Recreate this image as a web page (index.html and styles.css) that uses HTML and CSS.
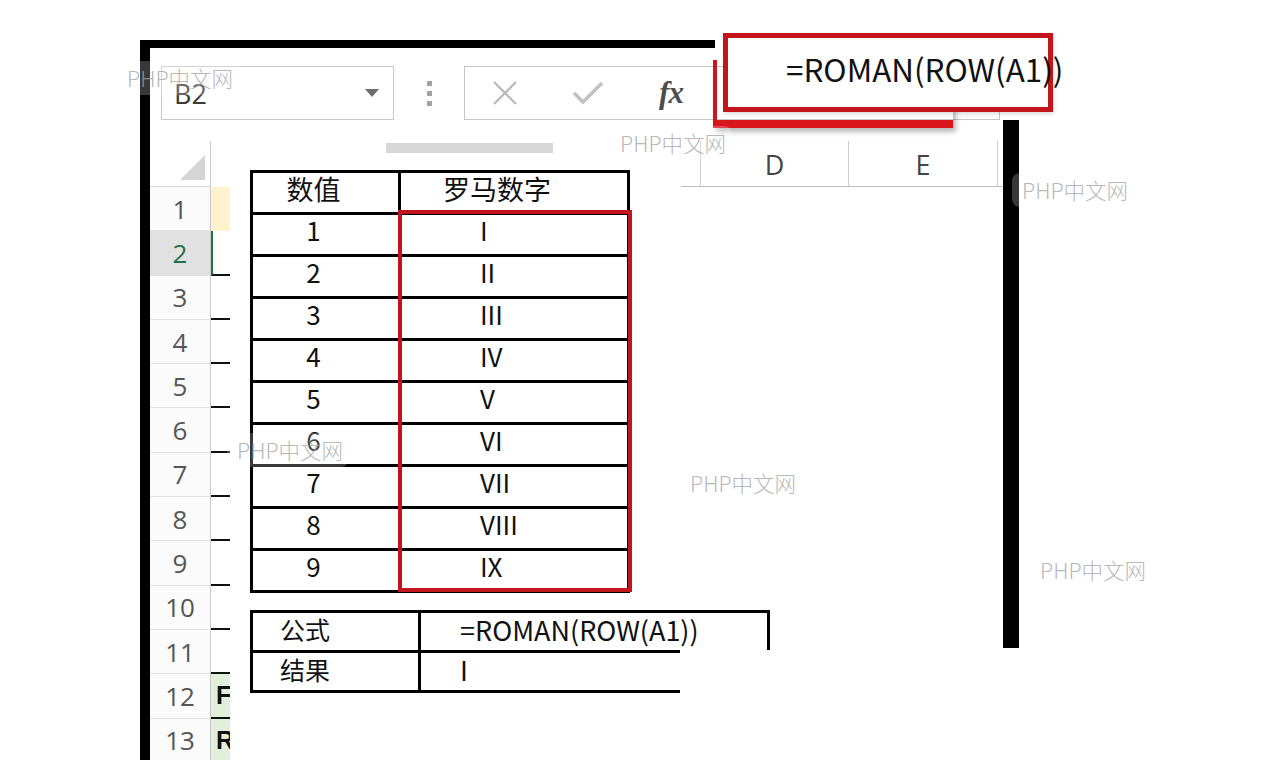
FILE: index.html
```html
<!DOCTYPE html>
<html lang="zh">
<head>
<meta charset="utf-8">
<title>ROMAN</title>
<link rel="stylesheet" href="styles.css">
</head>
<body>
<div class="canvas">
  <div class="excel">
    <div class="toolbar">
      <div class="namebox"><span class="ref">B2</span><span class="caret"></span></div>
      <div class="dots"><i></i><i></i><i></i></div>
      <div class="fbox">
        <span class="slot"><svg width="28" height="28" viewBox="0 0 28 28"><path d="M3 3 L25 25 M25 3 L3 25" stroke="#b8b8b8" stroke-width="2.2" fill="none"/></svg></span>
        <span class="slot"><svg width="34" height="28" viewBox="0 0 34 28"><path d="M3 14 L12 23 L31 4" stroke="#c2c2c2" stroke-width="3.6" fill="none"/></svg></span>
        <span class="slot fx">fx</span>
      </div>
    </div>
    <div class="colhead">
      <div class="corner"><span class="tri"></span></div>
      <div class="hgap1"></div>
      <div class="colbar"></div>
      <div class="hgap2"></div>
      <div class="cols">
        <div class="cpad"></div>
        <div class="col">D</div>
        <div class="col e">E</div>
        <div class="col end"></div>
      </div>
    </div>
    <div class="sheet">
      <div class="row"><div class="rh">1</div><div class="stub y"></div></div>
      <div class="row"><div class="rh sel">2</div><div class="stub g b"></div></div>
      <div class="row"><div class="rh">3</div><div class="stub b"></div></div>
      <div class="row"><div class="rh">4</div><div class="stub b"></div></div>
      <div class="row"><div class="rh">5</div><div class="stub b"></div></div>
      <div class="row"><div class="rh">6</div><div class="stub b"></div></div>
      <div class="row"><div class="rh">7</div><div class="stub b"></div></div>
      <div class="row"><div class="rh">8</div><div class="stub b"></div></div>
      <div class="row"><div class="rh">9</div><div class="stub b"></div></div>
      <div class="row"><div class="rh">10</div><div class="stub b"></div></div>
      <div class="row"><div class="rh">11</div><div class="stub b"></div></div>
      <div class="row"><div class="rh">12</div><div class="stub f b">F</div></div>
      <div class="row"><div class="rh">13</div><div class="stub f">R</div></div>
    </div>
  </div>

  <div class="vbar"></div>

  <div class="t1">
    <div class="n h">数值</div><div class="hr h">罗马数字</div>
    <div class="n">1</div><div class="r">I</div>
    <div class="n">2</div><div class="r">II</div>
    <div class="n">3</div><div class="r">III</div>
    <div class="n">4</div><div class="r">IV</div>
    <div class="n">5</div><div class="r">V</div>
    <div class="n">6</div><div class="r">VI</div>
    <div class="n">7</div><div class="r">VII</div>
    <div class="n">8</div><div class="r">VIII</div>
    <div class="n">9</div><div class="r">IX</div>
  </div>
  <div class="redbox"></div>

  <div class="t2">
    <div class="k">公式</div><div class="v">=ROMAN(ROW(A1))</div>
    <div class="k">结果</div><div class="v">I</div>
  </div>
  <div class="t2cut"></div>

  <div class="patch"></div>
  <div class="callout-back"></div>
  <div class="callout">=ROMAN(ROW(A1))</div>

  <div class="wm w1">PHP中文网</div>
  <div class="wm w2">PHP中文网</div>
  <div class="wm w3">PHP中文网</div>
  <div class="wm w4">PHP中文网</div>
  <div class="wm w5">PHP中文网</div>
  <div class="wm w6">PHP中文网</div>
</div>
</body>
</html>
```

FILE: styles.css
```css
html, body {
  margin: 0;
  padding: 0;
  background: #fff;
}
body {
  width: 1280px;
  height: 760px;
  overflow: hidden;
  font-family: "Open Sans", "Noto Sans", "Liberation Sans", sans-serif;
}
.canvas {
  position: relative;
  width: 1280px;
  height: 760px;
  overflow: hidden;
  padding: 40px 0 0 140px;
  box-sizing: border-box;
}

/* Excel window */
.excel {
  width: 863px;
  height: 720px;
  box-sizing: border-box;
  border-left: 10px solid #000;
  border-top: 8px solid #000;
  background: #fff;
}
.toolbar {
  height: 93px;
  box-sizing: border-box;
  padding: 18px 0 0 11px;
  display: flex;
  align-items: flex-start;
}
.namebox {
  width: 233px;
  height: 54px;
  box-sizing: border-box;
  border: 1px solid #c6c6c6;
  display: flex;
  align-items: center;
  justify-content: space-between;
  padding: 0 14px 0 12px;
}
.ref {
  font-size: 27px;
  color: #3a3a3a;
  line-height: 1;
}
.caret {
  width: 0;
  height: 0;
  border-left: 7px solid transparent;
  border-right: 7px solid transparent;
  border-top: 8px solid #6e6e6e;
}
.dots {
  width: 70px;
  height: 54px;
  display: flex;
  flex-direction: column;
  align-items: center;
  justify-content: center;
  gap: 5px;
}
.dots i {
  display: block;
  width: 5px;
  height: 5px;
  background: #a3a3a3;
}
.fbox {
  width: 536px;
  height: 54px;
  box-sizing: border-box;
  border: 1px solid #c6c6c6;
  display: flex;
  align-items: center;
  padding-left: 23px;
  gap: 49px;
}
.slot {
  width: 34px;
  height: 34px;
  display: flex;
  align-items: center;
  justify-content: center;
}
.fx {
  font-family: "Liberation Serif", "DejaVu Serif", serif;
  font-style: italic;
  font-weight: bold;
  font-size: 31px;
  color: #4d4d4d;
  letter-spacing: -1px;
}

/* column header row */
.colhead {
  height: 46px;
  display: flex;
}
.corner {
  width: 61px;
  height: 46px;
  box-sizing: border-box;
  border-right: 1px solid #c8c8c8;
  border-bottom: 1px solid #d4d4d4;
  display: flex;
  align-items: flex-end;
  justify-content: flex-end;
  padding: 0 5px 6px 0;
}
.tri {
  width: 0;
  height: 0;
  border-left: 25px solid transparent;
  border-bottom: 25px solid #d5d5d5;
}
.hgap1 { width: 175px; }
.colbar {
  width: 167px;
  height: 10px;
  margin-top: 2px;
  background: #d8d8d8;
}
.hgap2 { width: 128px; }
.cols {
  width: 322px;
  height: 46px;
  box-sizing: border-box;
  border-bottom: 1px solid #bdbdbd;
  display: flex;
}
.cpad { width: 19px; }
.col {
  width: 148px;
  box-sizing: border-box;
  border-left: 1px solid #cfcfcf;
  display: flex;
  align-items: center;
  justify-content: center;
  font-size: 27px;
  color: #444;
  padding-top: 2px;
}
.col.e { width: 149px; }
.col.end { width: 6px; }

/* rows */
.sheet {
  display: flex;
  flex-direction: column;
}
.row {
  height: 44.3px;
  display: flex;
}
.rh {
  width: 61px;
  box-sizing: border-box;
  border-right: 1px solid #c8c8c8;
  border-bottom: 1px solid #e0e0e0;
  background: #fbfbfb;
  display: flex;
  align-items: center;
  justify-content: center;
  font-size: 26px;
  color: #555;
}
.rh.sel {
  background: #e1e1e1;
  color: #217346;
}
.stub {
  width: 19px;
  box-sizing: border-box;
  overflow: hidden;
}
.stub.y { background: #fff2cc; }
.stub.g { border-left: 2px solid #217346; }
.stub.b { border-bottom: 2px solid #111; }
.stub.f {
  background: #e2efda;
  font-family: "Liberation Sans", Arial, sans-serif;
  font-weight: bold;
  font-size: 25px;
  color: #111;
  padding-left: 5px;
  display: flex;
  align-items: center;
}

.vbar {
  position: absolute;
  left: 1003px;
  top: 120px;
  width: 16px;
  height: 528px;
  background: #000;
}

/* overlay table 1 */
.t1 {
  position: absolute;
  left: 250px;
  top: 170px;
  display: grid;
  grid-template-columns: 145px 226px;
  grid-auto-rows: 39px;
  gap: 3px;
  padding: 3px;
  background: #000;
  font-family: "Noto Sans CJK JP", "Noto Sans CJK SC", sans-serif;
  font-size: 26px;
  color: #111;
}
.t1 > div {
  background: #fff;
  display: flex;
  align-items: center;
  line-height: 1;
  padding-bottom: 9px;
  box-sizing: border-box;
}
.t1 .h {
  font-size: 27px;
  padding-bottom: 8px;
}
.t1 .n {
  justify-content: center;
  padding-right: 24px;
}
.t1 .hr {
  justify-content: center;
  padding-right: 34px;
}
.t1 .r {
  padding-left: 79px;
}
.redbox {
  position: absolute;
  left: 398px;
  top: 210px;
  width: 234px;
  height: 382px;
  box-sizing: border-box;
  border: 4px solid #c1161d;
}

/* overlay table 2 */
.t2 {
  position: absolute;
  left: 250px;
  top: 610px;
  display: grid;
  grid-template-columns: 165px 346px;
  grid-auto-rows: 37px;
  gap: 3px;
  padding: 3px;
  background: #000;
  font-family: "Noto Sans CJK JP", "Noto Sans CJK SC", sans-serif;
  font-size: 25px;
  color: #111;
}
.t2 > div {
  background: #fff;
  display: flex;
  align-items: center;
  line-height: 1;
  padding-bottom: 4px;
  box-sizing: border-box;
}
.t2 .k { padding-left: 27px; }
.t2 .v {
  padding-left: 39px;
  font-size: 27px;
}
.t2cut {
  position: absolute;
  left: 680px;
  top: 650px;
  width: 100px;
  height: 50px;
  background: #fff;
}

/* callout */
.patch {
  position: absolute;
  left: 715px;
  top: 36px;
  width: 10px;
  height: 22px;
  background: #fff;
}
.callout-back {
  position: absolute;
  left: 713px;
  top: 60px;
  width: 240px;
  height: 68px;
  box-sizing: border-box;
  border-left: 4px solid #d0141b;
  border-bottom: 8px solid #d9161c;
  box-shadow: 3px 4px 5px rgba(0, 0, 0, 0.28);
}
.callout {
  position: absolute;
  left: 723px;
  top: 33px;
  width: 330px;
  height: 79px;
  box-sizing: border-box;
  border: 5px solid #c4141c;
  background: #fff;
  padding: 0 0 8px 58px;
  display: flex;
  align-items: center;
  white-space: nowrap;
  font-family: "Noto Sans CJK JP", "Noto Sans CJK SC", sans-serif;
  font-size: 31.4px;
  color: #111;
  line-height: 1;
  box-shadow: 1px 2px 4px rgba(0, 0, 0, 0.15);
}

/* watermarks */
.wm {
  position: absolute;
  font-family: "Noto Sans CJK SC", "Noto Sans", sans-serif;
  font-weight: 300;
  font-size: 21.5px;
  line-height: 1;
  color: rgba(165, 165, 165, 0.8);
  background: rgba(255, 255, 255, 0.22);
  border-radius: 8px;
  padding: 6px 6px 6px 10px;
  white-space: nowrap;
}
.w1 { left: 117px; top: 61px; }
.w2 { left: 610px; top: 126px; }
.w3 { left: 1012px; top: 173px; }
.w4 { left: 227px; top: 433px; }
.w5 { left: 680px; top: 466px; }
.w6 { left: 1030px; top: 553px; }
```
